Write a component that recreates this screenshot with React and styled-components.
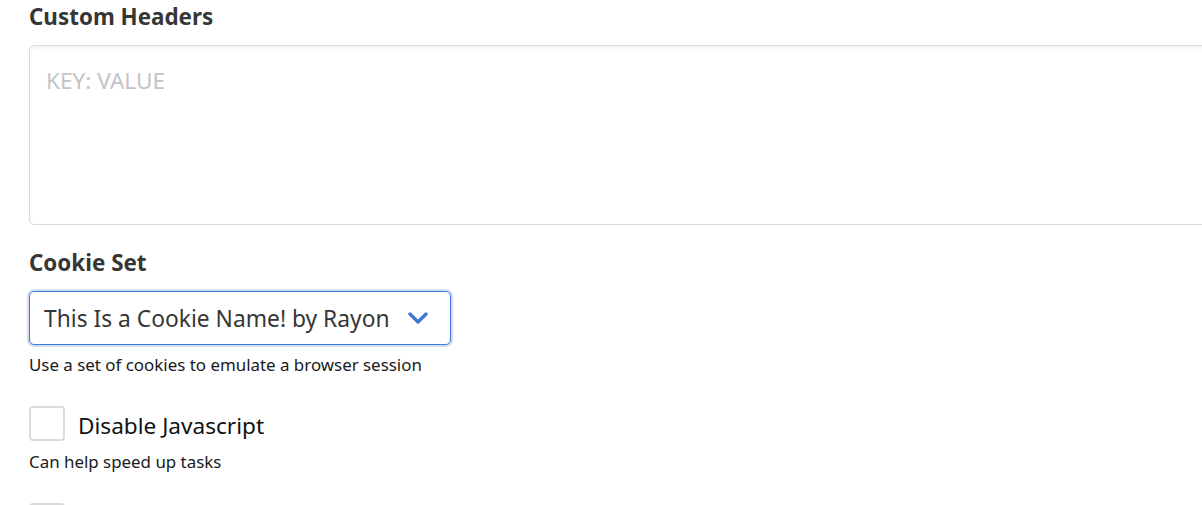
import React from "react";
import styled, { createGlobalStyle } from "styled-components";

const Global = createGlobalStyle`
  html, body { margin: 0; padding: 0; background: #fff; overflow: hidden; }
  body { font-family: "Segoe UI", "Noto Sans", "Open Sans", sans-serif; color: #363636; }
`;

const Page = styled.div`
  width: 1300px;
  padding: 2px 0 0 29px;
  box-sizing: border-box;
`;

const Field = styled.div`
  margin-bottom: ${(p) => p.$mb || 0}px;
`;

const Label = styled.label`
  display: block;
  font-size: 22.4px;
  font-weight: 700;
  line-height: 30px;
  color: #363636;
  margin-bottom: ${(p) => p.$mb || 10}px;
`;

const TextArea = styled.textarea`
  display: block;
  width: 100%;
  height: 180px;
  box-sizing: border-box;
  border: 1px solid #dbdbdb;
  border-radius: 5px;
  box-shadow: inset 0 2px 3px rgba(10, 10, 10, 0.06);
  padding: 20px 16px;
  font-family: inherit;
  font-size: 22.6px;
  line-height: 30px;
  color: #363636;
  resize: none;
  outline: none;
  &::placeholder { color: #c4c4c4; }
`;

const SelectWrap = styled.div`
  display: inline-flex;
  align-items: center;
  width: 422px;
  height: 54px;
  box-sizing: border-box;
  border: 1px solid #3d78d8;
  border-radius: 5px;
  box-shadow: 0 0 0 2px rgba(72, 125, 220, 0.25);
  padding: 0 22px 0 14px;
  justify-content: space-between;
`;

const SelectText = styled.span`
  font-size: 22.8px;
  line-height: 30px;
  padding-top: 2px;
  color: #363636;
  white-space: nowrap;
`;

const Help = styled.p`
  margin: ${(p) => p.$mt || 0}px 0 0;
  font-size: 16.9px;
  line-height: 20px;
  color: #1a1a1a;
`;

const CheckRow = styled.label`
  display: flex;
  align-items: center;
  gap: 13px;
`;

const Box = styled.span`
  display: block;
  width: 36px;
  height: 35px;
  box-sizing: border-box;
  border: 2px solid #dbdbdb;
  border-radius: 4px;
  background: #fff;
`;

const CheckText = styled.span`
  font-size: 22.6px;
  color: #111;
  line-height: 30px;
  padding-top: 4px;
`;

const Chevron = () => (
  <svg width="20" height="12" viewBox="0 0 20 12" fill="none">
    <path d="M2 2l8 8 8-8" stroke="#3d78d8" strokeWidth="3.4" strokeLinecap="round" strokeLinejoin="round" />
  </svg>
);

export default function App() {
  return (
    <>
      <Global />
      <Page>
        <Field $mb={23}>
          <Label $mb={13}>Custom Headers</Label>
          <TextArea placeholder="KEY: VALUE" />
        </Field>
        <Field $mb={31}>
          <Label $mb={13}>Cookie Set</Label>
          <SelectWrap>
            <SelectText>This Is a Cookie Name! by Rayon</SelectText>
            <Chevron />
          </SelectWrap>
          <Help $mt={10}>Use a set of cookies to emulate a browser session</Help>
        </Field>
        <Field $mb={31}>
          <CheckRow>
            <Box />
            <CheckText>Disable Javascript</CheckText>
          </CheckRow>
          <Help $mt={11}>Can help speed up tasks</Help>
        </Field>
        <Field>
          <CheckRow>
            <Box />
          </CheckRow>
        </Field>
      </Page>
    </>
  );
}
